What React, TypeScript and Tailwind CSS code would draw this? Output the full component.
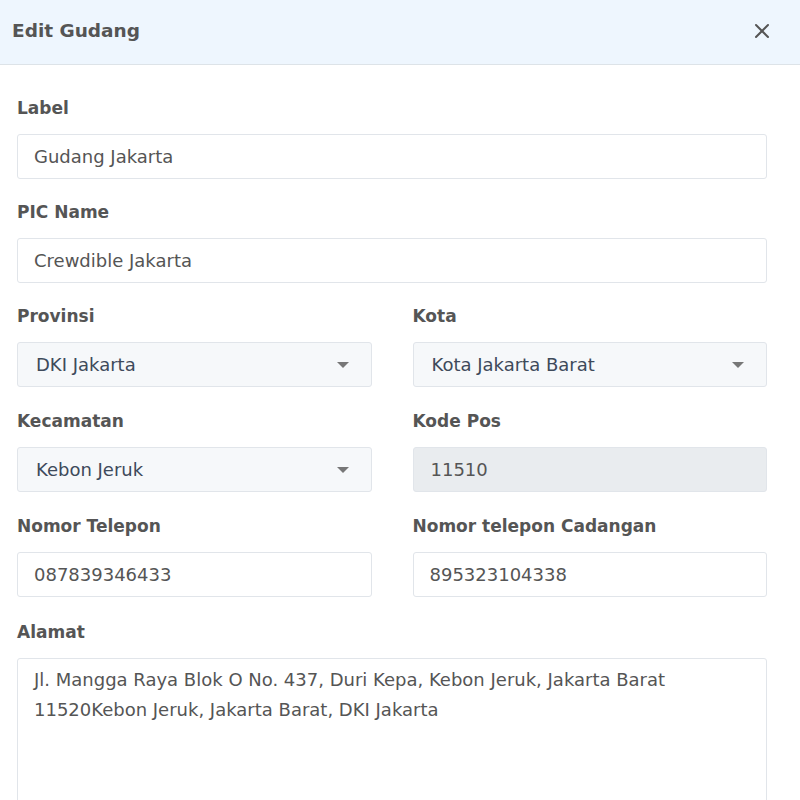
import { X } from "lucide-react";

const font = { fontFamily: '"DejaVu Sans", "Noto Sans", sans-serif' };

const Label = ({ children }: { children: string }) => (
  <label className="block text-[17px] font-bold text-[#555] leading-[20px] mb-[16px]">{children}</label>
);

const TextInput = ({ value, disabled }: { value: string; disabled?: boolean }) => (
  <div
    className={`h-[45px] flex items-center rounded-[3px] border border-[#e1e5ea] text-[18px] text-[#555] ${
      disabled ? "bg-[#e9ecef] pl-[17px]" : "bg-white pl-[16px]"
    }`}
  >
    {value}
  </div>
);

const SelectInput = ({ value }: { value: string }) => (
  <div className="h-[45px] flex items-center justify-between rounded-[3px] border border-[#e1e5ea] bg-[#f6f8fa] pl-[18px] pr-[22px] text-[18px] text-[#3e4a5b]">
    <span>{value}</span>
    <svg width="12" height="6" viewBox="0 0 12 6">
      <path d="M0 0 L12 0 L6 6 Z" fill="#777" />
    </svg>
  </div>
);

export default function App() {
  return (
    <div className="w-[800px] h-[800px] overflow-hidden bg-white" style={font}>
      <div className="h-[65px] flex items-center justify-between bg-[#eef6fe] border-b border-[#dde3e8] pl-[12px] pr-[26px]">
        <h3 className="text-[18.5px] font-bold text-[#555] -mt-[2px]">Edit Gudang</h3>
        <X size={24} strokeWidth={2} className="text-[#555] -mt-[2px]" />
      </div>

      <div className="pl-[17px] pr-[33px] pt-[33px]">
        <div className="mb-[23px]">
          <Label>Label</Label>
          <TextInput value="Gudang Jakarta" />
        </div>
        <div className="mb-[23px]">
          <Label>PIC Name</Label>
          <TextInput value="Crewdible Jakarta" />
        </div>
        <div className="grid grid-cols-2 gap-x-[41px] gap-y-[24px] mb-[25px]">
          <div>
            <Label>Provinsi</Label>
            <SelectInput value="DKI Jakarta" />
          </div>
          <div>
            <Label>Kota</Label>
            <SelectInput value="Kota Jakarta Barat" />
          </div>
          <div>
            <Label>Kecamatan</Label>
            <SelectInput value="Kebon Jeruk" />
          </div>
          <div>
            <Label>Kode Pos</Label>
            <TextInput value="11510" disabled />
          </div>
          <div>
            <Label>Nomor Telepon</Label>
            <TextInput value="087839346433" />
          </div>
          <div>
            <Label>Nomor telepon Cadangan</Label>
            <TextInput value="895323104338" />
          </div>
        </div>
        <div>
          <Label>Alamat</Label>
          <div className="h-[200px] rounded-[3px] border border-[#e1e5ea] pl-[16px] pr-[16px] pt-[6px] text-[18px] leading-[30px] text-[#555]">
            Jl. Mangga Raya Blok O No. 437, Duri Kepa, Kebon Jeruk, Jakarta Barat
            <br />
            11520Kebon Jeruk, Jakarta Barat, DKI Jakarta
          </div>
        </div>
      </div>
    </div>
  );
}
